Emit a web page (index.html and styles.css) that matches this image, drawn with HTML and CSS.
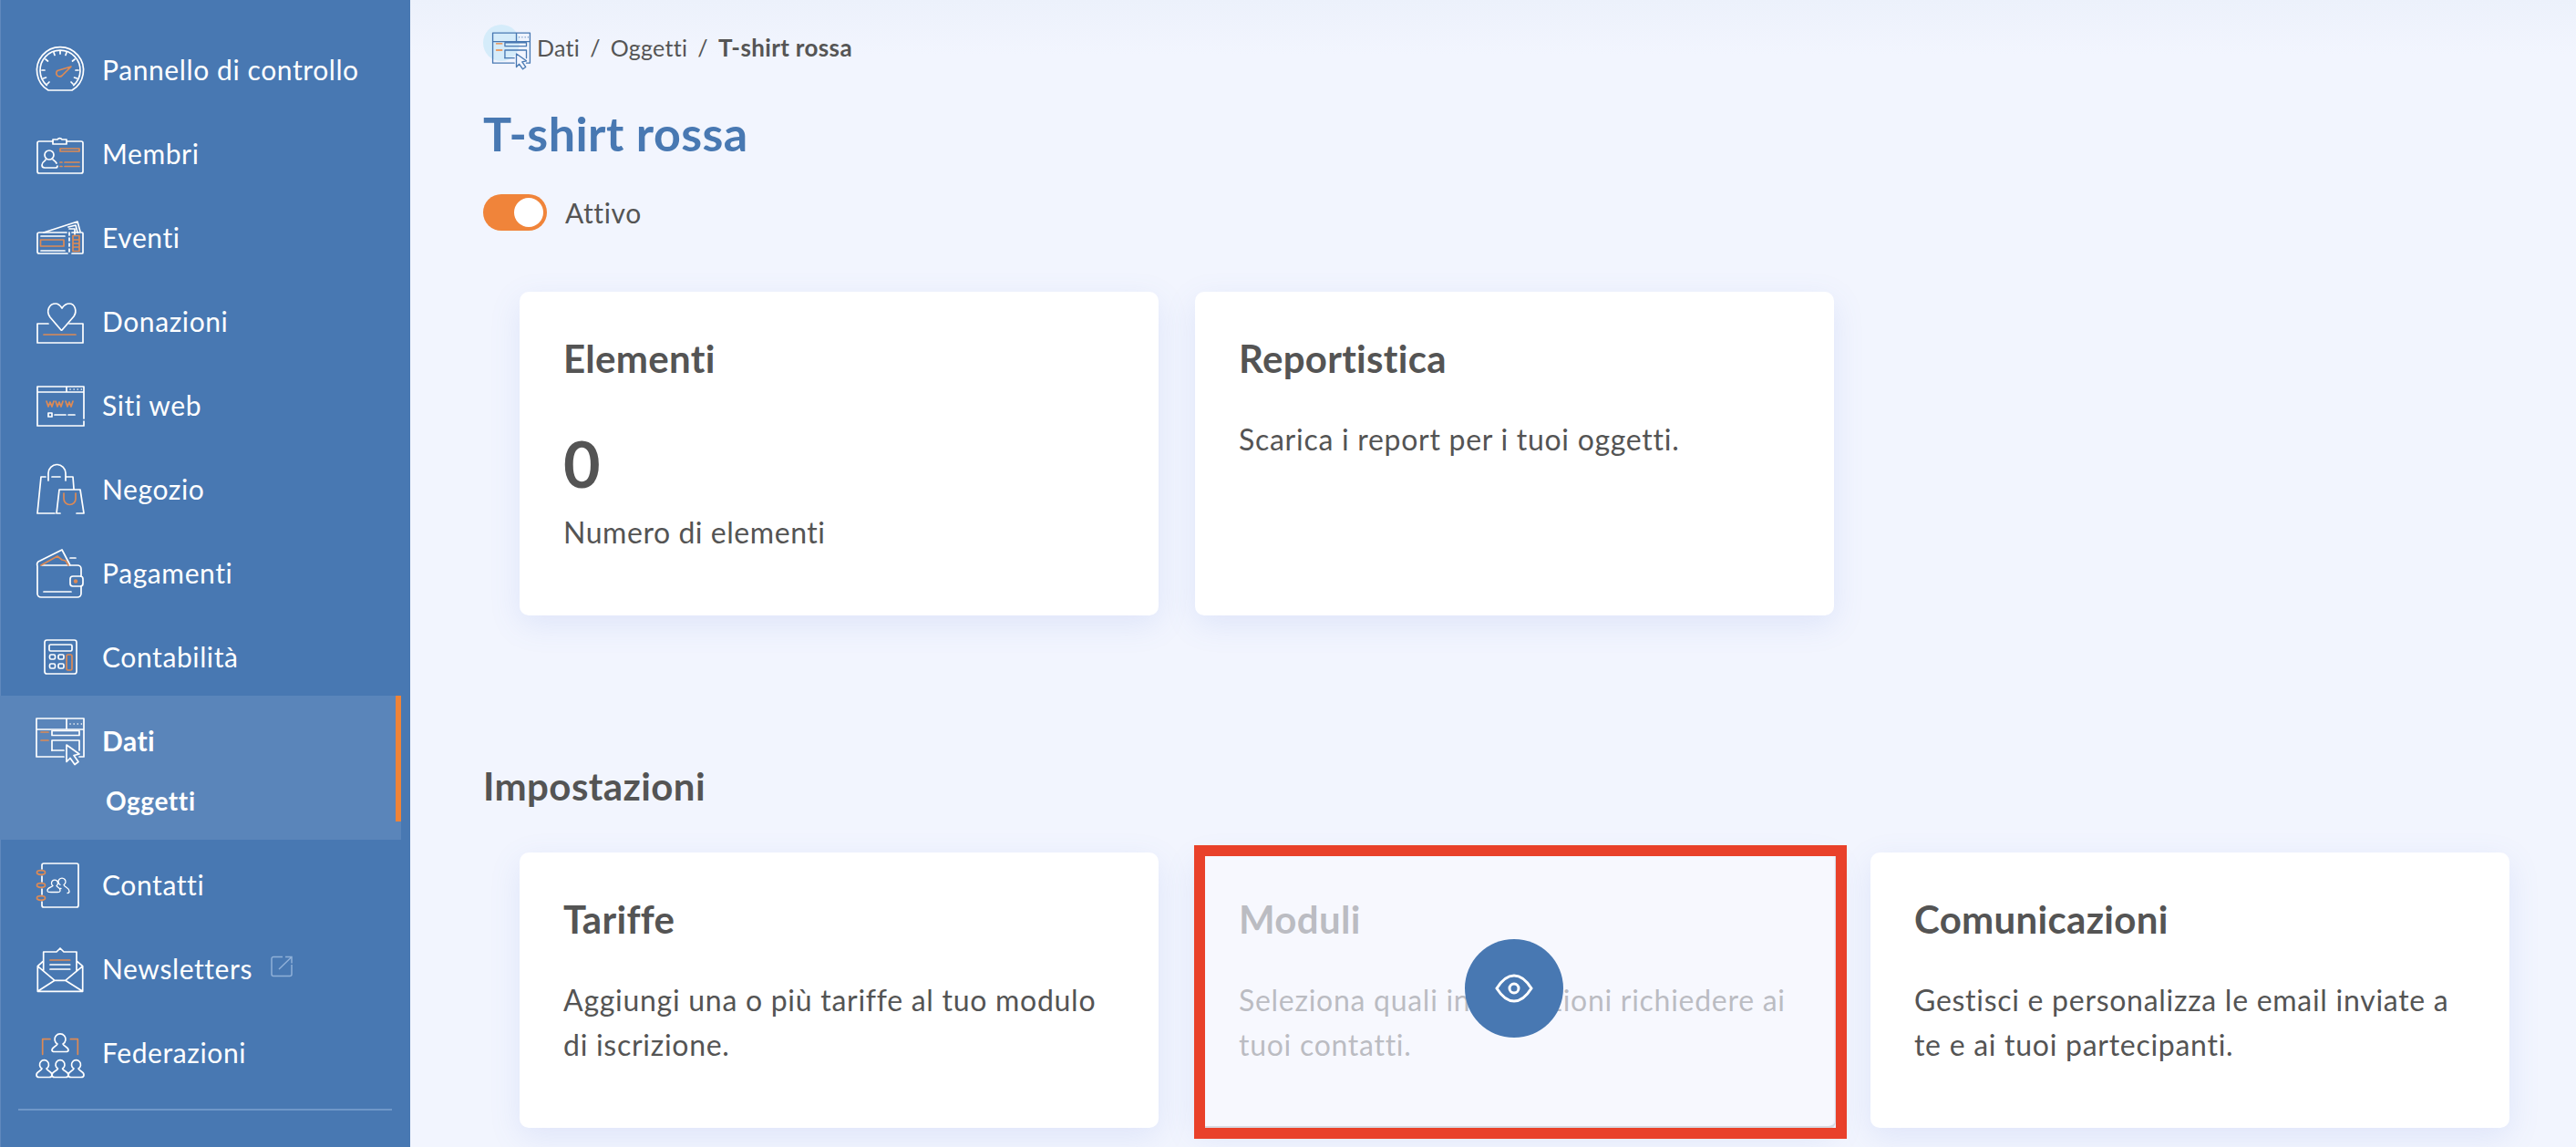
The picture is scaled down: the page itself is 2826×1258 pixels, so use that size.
FILE: index.html
```html
<!DOCTYPE html>
<html lang="it">
<head>
<meta charset="utf-8">
<title>T-shirt rossa</title>
<link rel="stylesheet" href="styles.css">
</head>
<body>
<svg class="defs" width="0" height="0" aria-hidden="true">
  <symbol id="i-dati" viewBox="0 0 56 56">
    <path class="w" d="M49 46h5V4H2v42h30M2 16h52M35 4v12"/>
    <path class="w dot" d="M39 10h13"/>
    <path class="o" d="M7 19h8M7 28h8"/>
    <path class="w" d="M19 17.500h30v5H19zM19 39V28h30v11"/>
    <path class="w" d="M19 39h13"/>
    <path class="w" d="M35 33l14 10-6 1.500 5 7-4 3-5-7-4 4z"/>
  </symbol>
</svg>
<div class="app">
  <aside class="sidebar">
    <nav class="nav">
      <a class="item">
        <svg class="ico" viewBox="0 0 56 56"><path class="w" d="M15 51A25.500 25.500 0 1 1 41 51Z"/><path class="w" d="M13.300 45.500A22 22 0 1 1 42.700 45.500"/><path class="w" d="M8 29h3M45 29h3M12 17l2.500 2M44 17l-2.500 2M21 9.500l1 3M35 9.500l-1 3M28 8v3M9.500 38l3-1M46.500 38l-3-1M14 44l2-2M42 44l-2-2"/><path class="o" d="M25 29.500L40 25 30 35a3.700 3.700 0 1 1-5-5.500z"/></svg>
        <span>Pannello di controllo</span>
      </a>
      <a class="item">
        <svg class="ico" viewBox="0 0 56 56"><path class="w" d="M20 15H5a2 2 0 0 0-2 2v31a2 2 0 0 0 2 2h46a2 2 0 0 0 2-2V17a2 2 0 0 0-2-2H35"/><path class="w" d="M20 18v-5h5a3 3 0 0 1 5 0h5v5z"/><circle class="w" cx="16" cy="30" r="5"/><path class="w" d="M12 35c0 2-4 2-4 6 0 2 1 3 3 3h12c2 0 2-1 2-2M20 35c1 1 3 2 4 4"/><path class="o" d="M28 23h21v3H28zM28 38h2M28 42.500h2M33 38h16M33 42.500h16"/></svg>
        <span>Membri</span>
      </a>
      <a class="item">
        <svg class="ico" viewBox="0 0 56 56"><path class="w" d="M10 23L47 11l3 11M37 17l8-2 2 8M38 19h6v6"/><path class="w" d="M35 23H5a2 2 0 0 0-2 2v19a2 2 0 0 0 2 2h31M41 46h11a1 1 0 0 0 1-1V24a1 1 0 0 0-1-1H41"/><path class="w dash" d="M38 23v23"/><path class="w" d="M7 27h26M7 43h26"/><path class="o" d="M6.500 31h25.500v7H6.500zM42 26.500h7v17h-7zM42 31h7M42 35h7M42 39h7"/></svg>
        <span>Eventi</span>
      </a>
      <a class="item">
        <svg class="ico" viewBox="0 0 56 56"><path class="w" d="M15 31H3v21h50V31H38"/><path class="w" d="M29 38L17 24c-5-7-1-15 6-15 3 0 5 2 7 5 2-3 4-5 8-5 6 0 9 8 5 14L30 38"/><path class="o" d="M10 43h35"/></svg>
        <span>Donazioni</span>
      </a>
      <a class="item">
        <svg class="ico" viewBox="0 0 56 56"><path class="w" d="M54 46v5H3V8h51v35M3 14h51M35 8v6"/><path class="w dot" d="M39 11h13"/><path class="o" d="M13 24l2 6 2-5 2 5 2-6M23 24l2 6 2-5 2 5 2-6M34 24l2 6 2-5 2 5 2-6"/><path class="w" d="M15 37h4v4h-4zM22 39h12M37 39h7"/></svg>
        <span>Siti web</span>
      </a>
      <a class="item">
        <svg class="ico" viewBox="0 0 56 56"><path class="w" d="M12 15H7L3 55h19M19 15h9M35 15h7l1 13M15 19V11a9.500 9.500 0 0 1 19 0v8M28 55h-4l3-26h23l4 26h-8"/><path class="o" d="M32 33v6a6.500 6.500 0 0 0 13 0v-6"/></svg>
        <span>Negozio</span>
      </a>
      <a class="item">
        <svg class="ico" viewBox="0 0 56 56"><path class="w" d="M3 21v30a4 4 0 0 0 4 4h40a4 4 0 0 0 4-4V43M51 32v-8a4 4 0 0 0-4-4H8M3 21c-1-3 0-5 3-6L30 3l9 17M39 12h6"/><rect class="w" x="39" y="32" width="14" height="11" rx="3"/><circle class="f" cx="45" cy="37.500" r="2.200"/><path class="w" d="M10 49h30"/><path class="o" d="M7 20l18-10 5 4 4 1 3 5"/></svg>
        <span>Pagamenti</span>
      </a>
      <a class="item">
        <svg class="ico" viewBox="0 0 56 56"><rect class="w" x="11" y="10" width="35" height="37" rx="2.500"/><rect class="w" x="16" y="15" width="25" height="7" rx="1.500"/><rect class="w" x="16.500" y="26" width="6" height="5" rx="1.500"/><rect class="w" x="26" y="26" width="6" height="5" rx="1.500"/><rect class="w" x="16.500" y="36" width="6" height="5" rx="1.500"/><rect class="w" x="26" y="36" width="6" height="5" rx="1.500"/><rect class="o" x="35" y="26" width="6" height="17" rx="1.500"/></svg>
        <span>Contabilità</span>
      </a>
      <div class="group">
        <a class="item item-active">
          <svg class="ico"><use href="#i-dati"/></svg>
          <span>Dati</span>
        </a>
        <a class="sub">Oggetti</a>
      </div>
      <a class="item">
        <svg class="ico" viewBox="0 0 56 56"><path class="w" d="M8 11V7a2 2 0 0 1 2-2h36a2 2 0 0 1 2 2v44a2 2 0 0 1-2 2H10a2 2 0 0 1-2-2v-4M8 19v6M8 33v6"/><ellipse class="o" cx="7" cy="15" rx="4.500" ry="2.300"/><ellipse class="o" cx="7" cy="29" rx="4.500" ry="2.300"/><ellipse class="o" cx="7" cy="43" rx="4.500" ry="2.300"/><path class="w thin" d="M20 29.500a3.500 3.500 0 1 1 4 0c1 2 4 2 4 5 0 2-1 2-3 2h-7c-3 0-4 0-4-2 0-3 4-3 6-5zM28 28.500a4 4 0 1 1 4 0c1 3 6 3 6 7 0 1-1 2-2 2M28 32.500h1"/></svg>
        <span>Contatti</span>
      </a>
      <a class="item">
        <svg class="ico" viewBox="0 0 56 56"><path class="w" d="M3.300 25.700V53.300H52.700V25.700L46 20M3.300 25.700L9.700 20M3.300 25.700L22 41.300H33.700L52.700 25.700M3.300 53.300L22 41.300M52.700 53.300L33.700 41.300M9.700 31V10H24l4-4 4 4H46V31"/><path class="o" d="M17 19h21.700"/><path class="w" d="M17 24h21.700M17 29h21.700"/></svg>
        <span>Newsletters</span>
        <svg class="ext" viewBox="0 0 24 24"><path d="M13 1.500H3A2 2 0 0 0 1 3.500v17a2 2 0 0 0 2 2h18a2 2 0 0 0 2-2V10M9 15L23 1.500M16 1.500h7v7"/></svg>
      </a>
      <a class="item">
        <svg class="ico" viewBox="0 0 56 56"><path class="o" d="M8.700 30.300V13.700H17M39.300 13.700h8V30.300"/><path class="w" d="M25 19c-1 3-6 3-6 7 0 1 1 1.500 3 1.500h12c2 0 3-.5 3-1.500 0-4-5-4-6-7a6 6 0 1 0-6 0zM8 46c-1 3-6 3-6 7 0 2 1 2.500 3 2.500h11c2 0 3-.5 3-2.500 0-4-5-4-6-7a5 5 0 1 0-5 0zM25.500 46c-1 3-6.500 3-6.500 7 0 2 1 2.500 3 2.500h12c2 0 3-.5 3-2.500 0-4-5.500-4-6.500-7a5 5 0 1 0-5 0zM43 46c-1 3-6 3-6 7 0 2 1 2.500 3 2.500h11c2 0 3-.5 3-2.500 0-4-5-4-6-7a5 5 0 1 0-5 0z"/></svg>
        <span>Federazioni</span>
      </a>
    </nav>
    <hr class="divider">
  </aside>

  <main class="main">
    <div class="crumbs">
      <span class="crumb-icon"><svg class="crumb-svg"><use href="#i-dati"/></svg></span>
      <span>Dati</span><span class="sep">/</span><span>Oggetti</span><span class="sep">/</span><strong>T-shirt rossa</strong>
    </div>
    <h1 class="title">T-shirt rossa</h1>
    <div class="status">
      <span class="toggle"><span class="knob"></span></span>
      <span>Attivo</span>
    </div>

    <section class="cards cards-top">
      <article class="card">
        <h3>Elementi</h3>
        <div class="metric">0</div>
        <p class="metric-label">Numero di elementi</p>
      </article>
      <article class="card">
        <h3>Reportistica</h3>
        <p>Scarica i report per i tuoi oggetti.</p>
      </article>
    </section>

    <h2 class="section">Impostazioni</h2>

    <section class="cards cards-bottom">
      <article class="card">
        <h3>Tariffe</h3>
        <p>Aggiungi una o più tariffe al tuo modulo di iscrizione.</p>
      </article>
      <article class="card card-hidden">
        <h3>Moduli</h3>
        <p>Seleziona quali informazioni richiedere ai tuoi contatti.</p>
        <div class="veil"></div>
        <div class="eye">
          <svg viewBox="0 0 42 32"><path d="M2 16C7 8 13 2 21 2s14 6 19 14c-5 8-11 14-19 14S7 24 2 16z"/><circle cx="21" cy="16" r="5"/></svg>
        </div>
        <div class="highlight"></div>
      </article>
      <article class="card">
        <h3>Comunicazioni</h3>
        <p>Gestisci e personalizza le email inviate a te e ai tuoi partecipanti.</p>
      </article>
    </section>
  </main>
</div>
</body>
</html>
```

FILE: styles.css
```css
* { box-sizing: border-box; }
html, body { margin: 0; height: 100%; overflow: hidden; }
body {
  font-family: "Lato", "Noto Sans", sans-serif;
  color: #545454;
  background: #f2f5fe;
}
.defs { position: absolute; }
.app { display: flex; height: 1258px; overflow: hidden; }

/* Sidebar */
.sidebar {
  flex: 0 0 450px;
  background: #4878b2;
  border-left: 1px solid #6088bd;
  color: #fff;
  --accent: #dd8a55;
}
.nav { padding-top: 30px; display: flex; flex-direction: column; margin-left: -1px; }
.item {
  height: 92px;
  display: flex;
  align-items: center;
  padding-left: 38px;
  font-size: 30px;
  letter-spacing: .6px;
  color: #fff;
}
.ico { width: 56px; height: 56px; flex: none; margin-right: 18px; overflow: visible; }
.w, .o { fill: none; stroke-width: 1.7; stroke-linecap: round; stroke-linejoin: round; }
.w { stroke: currentColor; }
.o { stroke: var(--accent); }
.f { fill: var(--accent); }
.thin { stroke-width: 1.3; }
.dot { stroke-dasharray: .1 4; stroke-width: 1.6; }
.dash { stroke-dasharray: 3 3; }
.group {
  margin-top: -3px;
  margin-bottom: 3px;
  width: 440px;
  height: 158px;
  background: #5a85ba;
  position: relative;
}
.group::after {
  content: "";
  position: absolute;
  top: 0;
  right: 0;
  width: 6px;
  height: 138px;
  background: #ee8338;
}
.item-active { font-weight: 700; letter-spacing: .5px; height: 92px; margin-top: 3px; }
.sub {
  display: block;
  padding-left: 116px;
  margin-top: 2px;
  font-size: 28px;
  line-height: 36px;
  font-weight: 700;
  letter-spacing: .6px;
}
.ext {
  width: 24px;
  height: 24px;
  margin-left: 20px;
  margin-top: -4px;
  fill: none;
  stroke: #8fb0d8;
  stroke-width: 1.5;
}
.divider {
  border: 0;
  height: 2px;
  background: #6f97c8;
  margin: 16px 20px 0 19px;
}

/* Main */
.main {
  flex: 1;
  padding: 0 0 0 80px;
  background: linear-gradient(#ecf1fb 0, #f2f5fe 60px);
  min-width: 0;
}
.crumbs {
  display: flex;
  align-items: center;
  height: 44px;
  margin-top: 30px;
  font-size: 25px;
  color: #555;
  position: relative;
  padding-left: 59px;
  letter-spacing: .3px;
}
.crumb-icon {
  position: absolute;
  left: 0;
  top: -3px;
  width: 40px;
  height: 40px;
  border-radius: 50%;
  background: #d5ecfa;
}
.crumb-svg {
  position: absolute;
  left: 9px;
  top: 6px;
  width: 44px;
  height: 44px;
  color: #4878b2;
  --accent: #ee8338;
}
.sep { margin: 0 11px; }
.crumbs strong { font-size: 26px; font-weight: 700; letter-spacing: .35px; }
.title {
  margin: 40px 0 0;
  font-size: 52px;
  line-height: 64px;
  font-weight: 700;
  color: #4878b2;
  letter-spacing: .45px;
}
.status {
  display: flex;
  align-items: center;
  gap: 20px;
  margin-top: 35px;
  font-size: 30px;
  line-height: 40px;
  letter-spacing: .6px;
  color: #545454;
}
.toggle {
  width: 70px;
  height: 40px;
  border-radius: 20px;
  background: #f0843a;
  display: flex;
  justify-content: flex-end;
  align-items: center;
  padding-right: 4px;
}
.knob { width: 32px; height: 32px; border-radius: 50%; background: #fff; }

.cards {
  display: grid;
  grid-template-columns: repeat(3, 701px);
  column-gap: 40px;
  margin-left: 40px;
}
.cards-top { margin-top: 67px; height: 355px; }
.cards-bottom { margin-top: 47px; height: 302px; }
.card {
  background: #fff;
  border-radius: 10px;
  padding: 49px 48px 0;
  box-shadow: 0 10px 34px rgba(90, 120, 220, .13);
  position: relative;
}
.card h3 {
  margin: 0;
  font-size: 42px;
  line-height: 48px;
  font-weight: 700;
  letter-spacing: .3px;
  color: #545454;
}
.card p {
  margin: 41px 0 0;
  font-size: 32px;
  line-height: 48.500px;
  letter-spacing: .72px;
  color: #545454;
}
.card .metric {
  margin-top: 41px;
  font-size: 70px;
  line-height: 100px;
  font-weight: 700;
  color: #545454;
}
.card .metric-label { margin: 2px 0 0; letter-spacing: .55px; }
.section {
  margin: 0;
  padding-top: 161px;
  font-size: 42px;
  line-height: 52px;
  font-weight: 700;
  letter-spacing: .4px;
  color: #545454;
}

/* Highlighted, dimmed card */
.veil {
  position: absolute;
  inset: -6px -2px -1px 0;
  background: rgba(243, 245, 254, .65);
  border-bottom: 3px solid #d8dae2;
  border-right: 1px solid #d8dae2;
  border-radius: 0 0 8px 0;
}
.eye {
  position: absolute;
  left: 296px;
  top: 95px;
  width: 108px;
  height: 108px;
  border-radius: 50%;
  background: #4878b2;
  display: flex;
  align-items: center;
  justify-content: center;
}
.eye svg {
  width: 42px;
  height: 32px;
  fill: none;
  stroke: #fff;
  stroke-width: 3;
}
.highlight {
  position: absolute;
  left: -1px;
  top: -8px;
  width: 716px;
  height: 322px;
  border: 12.500px solid #e9412a;
}
```
